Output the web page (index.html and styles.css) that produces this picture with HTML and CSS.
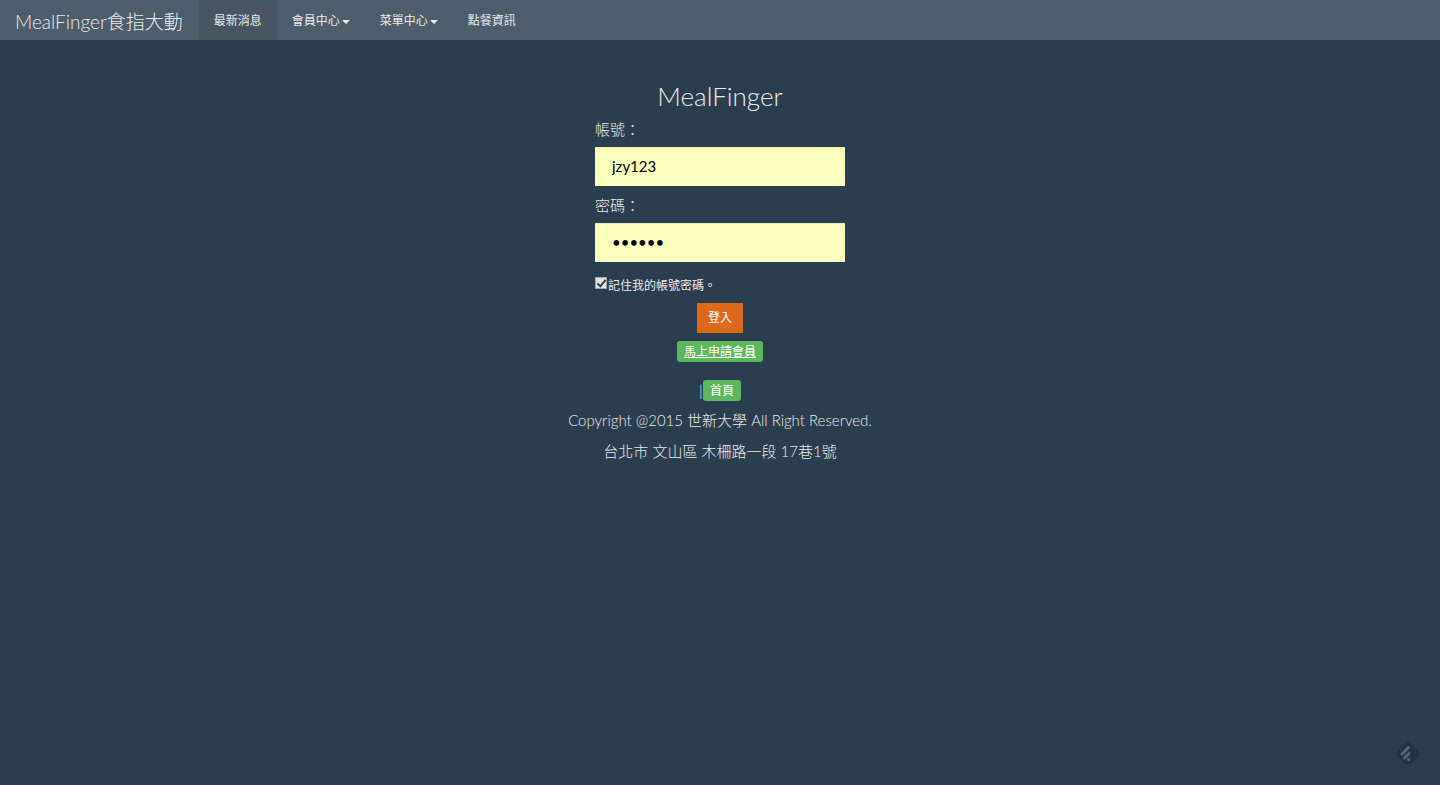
FILE: index.html
```html
<!DOCTYPE html>
<html lang="zh-Hant">
<head>
    <meta charset="UTF-8">
    <meta name="viewport" content="width=device-width, initial-scale=1.0">
    <title>MealFinger食指大動</title>
    <link rel="stylesheet" href="styles.css">
</head>
<body>
    <nav class="navbar">
        <a class="navbar-brand" href="#">MealFinger食指大動</a>
        <ul class="navbar-nav">
            <li class="active"><a href="#">最新消息</a></li>
            <li><a href="#">會員中心<span class="caret"></span></a></li>
            <li><a href="#">菜單中心<span class="caret"></span></a></li>
            <li><a href="#">點餐資訊</a></li>
        </ul>
    </nav>

    <main class="container">
        <h1 class="title">MealFinger</h1>

        <form class="login-form">
            <label class="form-label" for="account">帳號：</label>
            <input class="form-control" type="text" id="account" value="jzy123">

            <label class="form-label" for="password">密碼：</label>
            <input class="form-control" type="password" id="password" value="123456">

            <div class="checkbox">
                <input type="checkbox" id="remember" checked>
                <label for="remember">記住我的帳號密碼。</label>
            </div>

            <button class="btn-login" type="button">登入</button>
        </form>

        <a class="label-success register" href="#">馬上申請會員</a>

        <!-- Footer -->
        <footer class="footer">
            <div class="footer-links">|<a class="label-success" href="#">首頁</a></div>
            <p>Copyright @2015 世新大學 All Right Reserved.</p>
            <p>台北市 文山區 木柵路一段 17巷1號</p>
        </footer>
    </main>

    <a class="reader-button" href="#" aria-label="feedly">
        <svg width="24" height="22" viewBox="0 0 24 22">
            <path d="M10 1 Q12 -1 14 1 L23 10 Q25 12 23 14 L16 21 Q15 22 14 22 H10 Q9 22 8 21 L1 14 Q-1 12 1 10 Z" fill="#223240"/>
            <path d="M6 12 L12.5 5.500 M8.500 16 L13 11.500" stroke="#596673" stroke-width="3" stroke-linecap="round"/>
            <circle cx="12.500" cy="17.500" r="1.600" fill="#596673"/>
        </svg>
    </a>
</body>
</html>
```
FILE: styles.css
```css
* {
    box-sizing: border-box;
}

body {
    margin: 0;
    background-color: #2b3e50;
    color: #ebebeb;
    font-family: Lato, "Noto Sans CJK TC", sans-serif;
    font-size: 15px;
    font-weight: 300;
    line-height: 21px;
}

a {
    color: inherit;
    text-decoration: none;
}

/* Navbar */
.navbar {
    display: flex;
    min-height: 40px;
    background-color: #4e5d6c;
}

.navbar-brand {
    padding: 12px 16px 8px 15px;
    font-size: 19px;
    line-height: 20px;
}

.navbar-nav {
    display: flex;
    margin: 0;
    padding: 0;
    list-style: none;
    font-size: 12px;
    font-weight: 400;
}

.navbar-nav a {
    display: flex;
    align-items: center;
    gap: 2px;
    height: 40px;
    padding: 0 15px;
}

.navbar-nav .active {
    background-color: #485563;
}

.navbar-nav a:hover {
    background-color: #485563;
}

.caret {
    margin-top: 3px;
    border-top: 4px solid #ebebeb;
    border-left: 4px solid transparent;
    border-right: 4px solid transparent;
}

/* Login form */
.container {
    display: flex;
    flex-direction: column;
    align-items: center;
    padding: 41px 15px 20px;
}

.title {
    margin: 0 0 8px;
    font-size: 26px;
    font-weight: 300;
    line-height: 30px;
}

.login-form {
    display: flex;
    flex-direction: column;
    width: 100%;
    max-width: 250px;
}

.form-label {
    margin-bottom: 7px;
}

.form-control {
    height: 39px;
    margin-bottom: 9px;
    padding: 8px 17px 9px;
    border: 0;
    border-radius: 0;
    background-color: #faffbd;
    box-shadow: inset 0 1px 1px rgba(0, 0, 0, 0.075);
    color: #000;
    font-family: inherit;
    font-size: 15px;
    font-weight: 400;
}

.checkbox {
    display: flex;
    margin: 6px 0 9px;
    font-size: 12px;
    font-weight: 400;
    line-height: 17px;
}

.checkbox input {
    appearance: none;
    display: flex;
    justify-content: center;
    width: 12px;
    height: 12px;
    margin: 0 1px 0 0;
    border: 1px solid #a6a6a6;
    background-color: #e4e4e4;
}

.checkbox input:checked::before {
    content: "";
    box-sizing: border-box;
    width: 5px;
    height: 9px;
    border: solid #404040;
    border-width: 0 2px 2px 0;
    transform: rotate(40deg);
}

.btn-login {
    align-self: center;
    height: 30px;
    padding: 0 11px 3px;
    border: 0;
    background-color: #df691a;
    color: #fff;
    font-family: inherit;
    font-size: 12px;
    font-weight: 400;
}

.label-success {
    display: inline-block;
    padding: 0 7px;
    border-radius: 3px;
    background-color: #5cb85c;
    color: #fff;
    font-size: 12px;
    font-weight: 400;
}

.register {
    margin: 8px 0 18px;
    text-decoration: underline;
}

.label-success:hover {
    background-color: #449d44;
}

/* Footer */
.footer {
    text-align: center;
}

.footer-links {
    display: flex;
    justify-content: center;
    color: #5bc0de;
    font-weight: 400;
}

.footer p {
    margin: 9px 0 10px;
}

.reader-button {
    position: fixed;
    right: 20px;
    bottom: 21px;
    line-height: 0;
}
```
